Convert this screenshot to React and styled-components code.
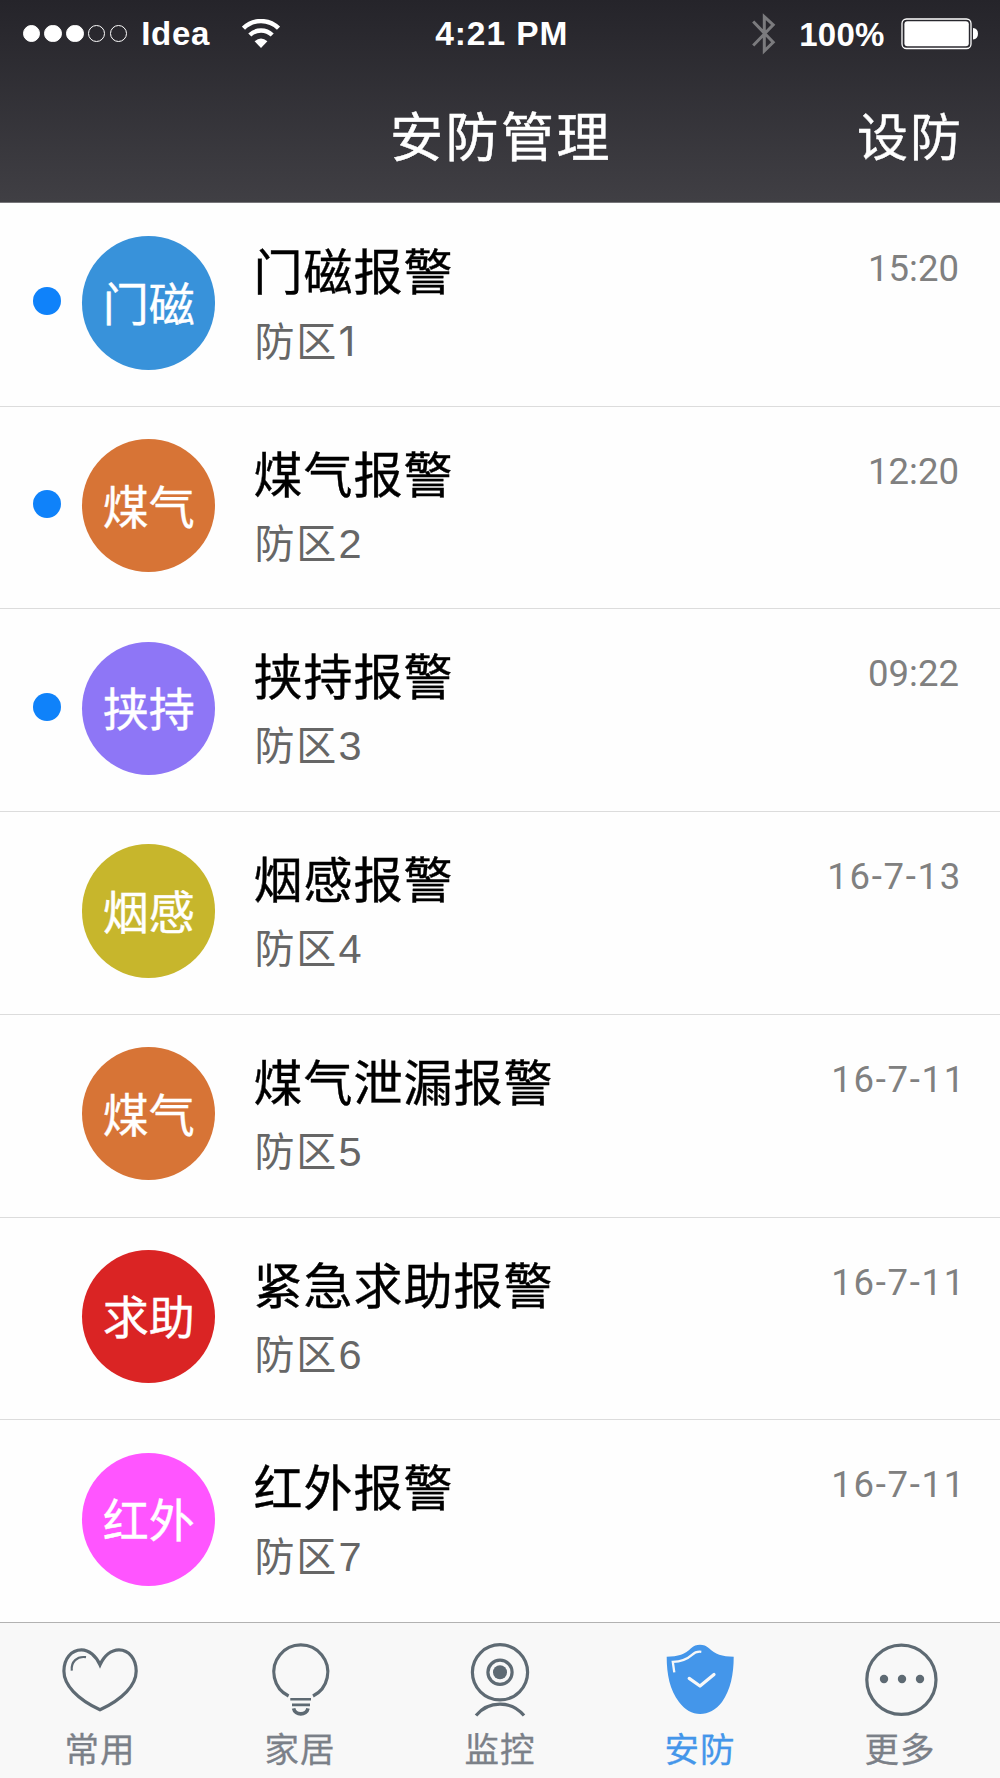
import React, {useState} from "react";
import styled, {createGlobalStyle} from "styled-components";

const alarms=[
    {tag:"门磁", title:"门磁报警", zone:"1", time:"15:20", inset:4, color:"#3892da", unread:true},
    {tag:"煤气", title:"煤气报警", zone:"2", time:"12:20", inset:4, color:"#d77436", unread:true},
    {tag:"挟持", title:"挟持报警", zone:"3", time:"09:22", inset:4, color:"#8e76f6", unread:true},
    {tag:"烟感", title:"烟感报警", zone:"4", time:"16-7-13", inset:1, color:"#c7b62c"},
    {tag:"煤气", title:"煤气泄漏报警", zone:"5", time:"16-7-11", inset:-3, color:"#d77436"},
    {tag:"求助", title:"紧急求助报警", zone:"6", time:"16-7-11", inset:-3, color:"#da2424"},
    {tag:"红外", title:"红外报警", zone:"7", time:"16-7-11", inset:-3, color:"#ff55ff"},
];

const tabs=[
    {id:"favorite", label:"常用", Icon:HeartIcon},
    {id:"home", label:"家居", Icon:BulbIcon},
    {id:"monitor", label:"监控", Icon:CameraIcon},
    {id:"security", label:"安防", Icon:ShieldIcon},
    {id:"more", label:"更多", Icon:MoreIcon},
];

function App(){
    const[activeTab, setActiveTab]=useState("security");

return (
<Screen>
    <GlobalStyle/>
    <Header>
        <StatusBar>
            <StatusLeft>
                <Signal>
                    <SignalDot $on/>
                    <SignalDot $on/>
                    <SignalDot $on/>
                    <SignalDot/>
                    <SignalDot/>
                </Signal>
                <Carrier>Idea</Carrier>
                <WifiIcon/>
            </StatusLeft>
            <Clock>4:21 PM</Clock>
            <StatusRight>
                <BluetoothIcon/>
                <Percent>100%</Percent>
                <BatteryIcon/>
            </StatusRight>
        </StatusBar>
        <NavBar>
            <Title>安防管理</Title>
            <Action>设防</Action>
        </NavBar>
    </Header>
    <List>
        {alarms.map((alarm)=>(
            <Row key={alarm.zone}>
                <Unread $show={alarm.unread}/>
                <Avatar $color={alarm.color}>{alarm.tag}</Avatar>
                <Info>
                    <Name>{alarm.title}</Name>
                    <Zone>防区<ZoneNumber $plain={alarm.zone==="1"}>{alarm.zone}</ZoneNumber></Zone>
                </Info>
                <Time $date={alarm.time.includes("-")} $inset={alarm.inset}>{alarm.time}</Time>
            </Row>
        ))}
    </List>
    <TabBar>
        {tabs.map(({id, label, Icon})=>(
            <Tab key={id} $active={activeTab===id} onClick={()=>setActiveTab(id)}>
                <Icon/>
                <TabLabel $active={activeTab===id}>{label}</TabLabel>
            </Tab>
        ))}
    </TabBar>
</Screen>
);
}

function WifiIcon(){
    return (
    <svg width="38" height="30" viewBox="0 0 38 30" fill="none" stroke="#fff">
        <path d="M1.5 9.2 A25 25 0 0 1 36.5 9.2" strokeWidth="4.4"/>
        <path d="M7.8 16 A16 16 0 0 1 30.2 16" strokeWidth="4.4"/>
        <path d="M12.6 22.2 Q19 16.6 25.4 22.2 L19 29Z" fill="#fff" stroke="none"/>
    </svg>
    );
}

function BluetoothIcon(){
    return (
    <svg width="24" height="44" viewBox="0 0 24 44" fill="none" stroke="#7b7b7e" strokeWidth="3">
        <path d="M1.2 9.5 L21.2 30.3 L12.3 39 V4.6 L21.2 12.8 L1.2 33.5"/>
    </svg>
    );
}

function BatteryIcon(){
    return (
    <svg width="78" height="32" viewBox="0 0 78 32">
        <rect x="1" y="1" width="69" height="29.5" rx="4.5" fill="none" stroke="#fff" strokeWidth="1.3"/>
        <rect x="3.4" y="3.2" width="64.4" height="25" rx="3" fill="#fff"/>
        <path d="M72 10 Q77 10.5 77 15.7 Q77 21 72 21.5Z" fill="#fff"/>
    </svg>
    );
}

function HeartIcon(){
    return (
    <TabSvg>
        <path d="M40 24.8 C36 16 29 9.8 21.5 9.8 C11 9.8 3.9 19 3.9 31 C3.9 45 17 59 40 69.8 C63 59 76.2 45 76.2 31 C76.2 19 69 9.8 59 9.8 C51 9.8 44 16 40 24.8Z"/>
        <path d="M11.8 30.7 C10.8 22 17 15.8 26 17.2" strokeWidth="2.2"/>
    </TabSvg>
    );
}

function BulbIcon(){
    return (
    <TabSvg>
        <path d="M28.6 56 A27 27 0 1 1 53 56"/>
        <path d="M30.3 59.2 H51 M32 64.9 H50" strokeWidth="2.6"/>
        <path d="M33.6 68.3 C35 75.7 46.6 75.7 48 68.3" strokeWidth="3.6"/>
    </TabSvg>
    );
}

function CameraIcon(){
    return (
    <TabSvg>
        <circle cx="40" cy="32.3" r="27.6"/>
        <circle cx="40" cy="32.3" r="12.1"/>
        <circle cx="40" cy="32.3" r="7" fill="currentColor" stroke="none"/>
        <path d="M16 75.6 A30.8 30.8 0 0 1 64 75.6"/>
    </TabSvg>
    );
}

function ShieldIcon(){
    return (
    <TabSvg>
        <path d="M6.7 16.7 C18 16.7 25.5 14 31 8.2 C36 3.6 44 3.6 49 8.2 C55 14 62 16.7 73.7 16.7 C73.7 34 70.5 50 62 62 C56 70 48 74 40.2 74 C32 74 25 70 19 62 C9.8 50 6.7 34 6.7 16.7Z" fill="currentColor" stroke="none"/>
        <path d="M14.3 32.3 L12.8 21.8 C23 21.5 29 17.5 32 14.8 C35 12 37.5 11.3 41.3 11.8" stroke="#f8f8f8" strokeWidth="2.3"/>
        <path d="M29.2 38.4 L40 46 L54 34.4" stroke="#f8f8f8" strokeWidth="3.2" strokeLinecap="round" strokeLinejoin="round"/>
    </TabSvg>
    );
}

function MoreIcon(){
    return (
    <TabSvg>
        <circle cx="41.4" cy="39.8" r="34.6"/>
        <g fill="currentColor" stroke="none">
            <circle cx="24" cy="39" r="4.2"/>
            <circle cx="42" cy="39" r="4.2"/>
            <circle cx="60" cy="39" r="4.2"/>
        </g>
    </TabSvg>
    );
}

const GlobalStyle=createGlobalStyle`
*{
    box-sizing:border-box;
}
body{
    margin:0;
    background:#fefefe;
}
`;
const Screen=styled.div`
display:flex;
flex-direction:column;
width:1000px;
height:1778px;
overflow:hidden;
font-family:"Liberation Sans", "Noto Sans CJK SC", sans-serif;
`;
const Header=styled.header`
height:203px;
flex-shrink:0;
color:white;
background:linear-gradient(#25242a, #403f44);
border-bottom:1px solid #77767a;
`;
const StatusBar=styled.div`
display:grid;
grid-template-columns:1fr auto 1fr;
align-items:center;
height:67px;
padding:0 21px 0 22.5px;
font-size:34px;
font-weight:700;
`;
const StatusLeft=styled.div`
display:flex;
align-items:center;
`;
const StatusRight=styled.div`
display:flex;
align-items:center;
justify-content:flex-end;
`;
const Signal=styled.div`
display:flex;
gap:4.2px;
`;
const SignalDot=styled.span`
width:17.6px;
height:17.6px;
border:1.3px solid white;
border-radius:50%;
background:${(p)=>p.$on?"white":"transparent"};
`;
const Carrier=styled.span`
width:115px;
padding-left:14px;
font-size:33px;
letter-spacing:0.7px;
`;
const Clock=styled.span`
padding-left:2px;
font-size:33.5px;
letter-spacing:0.9px;
`;
const Percent=styled.span`
margin:3px 16.5px 0 23px;
font-size:33px;
letter-spacing:0.2px;
`;
const NavBar=styled.div`
display:grid;
grid-template-columns:1fr auto 1fr;
align-items:center;
height:134px;
padding:0 37px 0 39px;
`;
const Title=styled.h1`
grid-column:2;
margin:0;
font-size:53px;
font-weight:400;
letter-spacing:2.5px;
-webkit-text-stroke:0.5px white;
`;
const Action=styled.span`
justify-self:end;
font-size:51px;
letter-spacing:2px;
-webkit-text-stroke:0.4px white;
`;
const List=styled.ul`
display:flex;
flex-direction:column;
flex:1;
margin:0;
padding:0;
list-style:none;
`;
const Row=styled.li`
display:flex;
flex:1;
padding-left:33.4px;
padding-right:37px;
border-top:1px solid #dcdcdc;
&:first-child{
    border-top-color:#fefefe;
}
`;
const Unread=styled.span`
width:28px;
height:28px;
margin-top:83.3px;
border-radius:50%;
background:${(p)=>p.$show?"#0f82fa":"transparent"};
`;
const Avatar=styled.div`
display:flex;
align-items:center;
justify-content:center;
width:133.4px;
height:133.4px;
margin:32.2px 0 0 20.6px;
padding-bottom:4px;
border-radius:50%;
color:white;
background:${(p)=>p.$color};
font-size:46px;
-webkit-text-stroke:0.4px white;
`;
const Info=styled.div`
flex:1;
padding:34px 0 0 38px;
`;
const Name=styled.div`
color:black;
font-size:49px;
line-height:70px;
letter-spacing:1px;
-webkit-text-stroke:0.4px black;
`;
const Zone=styled.div`
padding-left:1px;
color:#666;
font-size:40px;
line-height:66px;
letter-spacing:2px;
`;
const ZoneNumber=styled.span`
font-family:${(p)=>p.$plain?"Inter":"\"Liberation Sans\""}, sans-serif;
font-size:41.5px;
letter-spacing:0;
`;
const Time=styled.time`
margin-top:43px;
margin-right:${(p)=>p.$inset}px;
color:#808080;
font-family:Roboto, sans-serif;
font-size:36.5px;
line-height:44px;
letter-spacing:${(p)=>p.$date?"1.7px":"0"};
`;
const TabBar=styled.nav`
display:flex;
height:156px;
flex-shrink:0;
border-top:1px solid #b2b2b2;
background:#f8f8f8;
`;
const Tab=styled.button`
display:flex;
flex:1;
flex-direction:column;
align-items:center;
padding:17px 0 0;
border:none;
background:none;
color:${(p)=>p.$active?"#4496ea":"#5e6a73"};
font-family:inherit;
`;
const TabSvg=styled.svg.attrs({viewBox:"0 0 80 80"})`
width:80px;
height:80px;
fill:none;
stroke:currentColor;
stroke-width:3.2px;
`;
const TabLabel=styled.span`
margin-top:3px;
color:${(p)=>p.$active?"#4496ea":"#7b8088"};
font-size:34.5px;
line-height:54px;
letter-spacing:1px;
-webkit-text-stroke:0.3px currentColor;
`;

export default App;
